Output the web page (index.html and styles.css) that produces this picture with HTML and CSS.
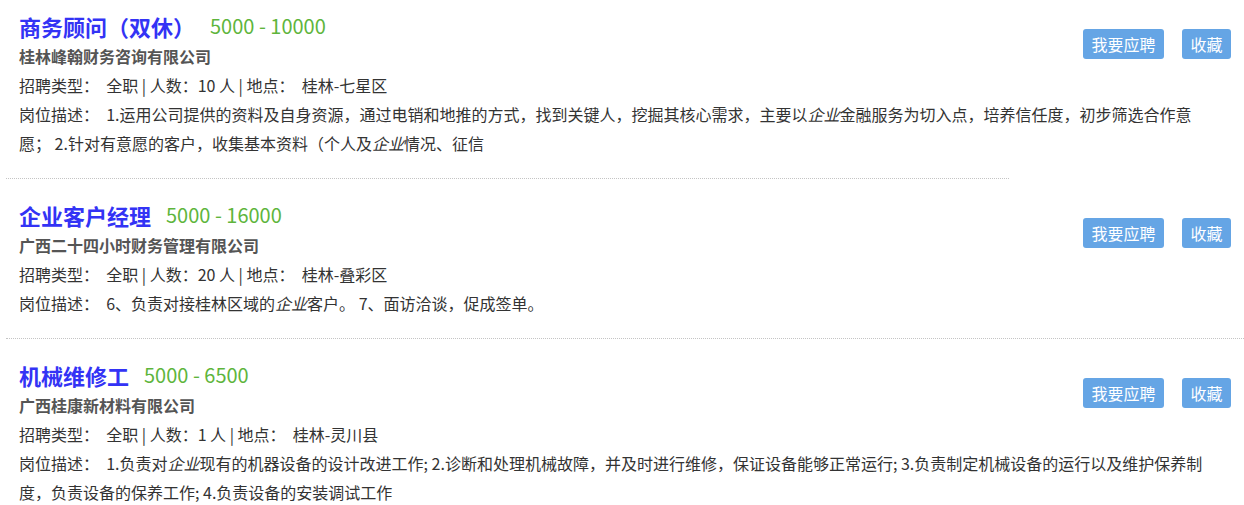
FILE: index.html
```html
<!DOCTYPE html>
<html>
<head>
	<meta charset="utf-8">
	<title>职位列表</title>
	<link rel="stylesheet" href="styles.css">
</head>
<body>
	<div class="job-list">
		<div class="job job-first">
			<div class="job-actions">
				<a class="btn" href="#">我要应聘</a>
				<a class="btn" href="#">收藏</a>
			</div>
			<div class="job-head">
				<a class="job-title" href="#">商务顾问（双休）</a>
				<span class="job-salary">5000 - 10000</span>
			</div>
			<div class="job-company">桂林峰翰财务咨询有限公司</div>
			<div class="job-info">招聘类型：&nbsp; 全职 | 人数：10 人 | 地点：&nbsp; 桂林-七星区</div>
			<div class="job-desc">岗位描述：&nbsp; 1.运用公司提供的资料及自身资源，通过电销和地推的方式，找到关键人，挖掘其核心需求，主要以<em>企业</em>金融服务为切入点，培养信任度，初步筛选合作意愿； 2.针对有意愿的客户，收集基本资料（个人及<em>企业</em>情况、征信</div>
		</div>
		<hr class="rule rule-short">

		<div class="job">
			<div class="job-actions">
				<a class="btn" href="#">我要应聘</a>
				<a class="btn" href="#">收藏</a>
			</div>
			<div class="job-head">
				<a class="job-title" href="#">企业客户经理</a>
				<span class="job-salary">5000 - 16000</span>
			</div>
			<div class="job-company">广西二十四小时财务管理有限公司</div>
			<div class="job-info">招聘类型：&nbsp; 全职 | 人数：20 人 | 地点：&nbsp; 桂林-叠彩区</div>
			<div class="job-desc">岗位描述：&nbsp; 6、负责对接桂林区域的<em>企业</em>客户。 7、面访洽谈，促成签单。</div>
		</div>
		<hr class="rule">

		<div class="job">
			<div class="job-actions">
				<a class="btn" href="#">我要应聘</a>
				<a class="btn" href="#">收藏</a>
			</div>
			<div class="job-head">
				<a class="job-title" href="#">机械维修工</a>
				<span class="job-salary">5000 - 6500</span>
			</div>
			<div class="job-company">广西桂康新材料有限公司</div>
			<div class="job-info">招聘类型：&nbsp; 全职 | 人数：1 人 | 地点：&nbsp; 桂林-灵川县</div>
			<div class="job-desc">岗位描述：&nbsp; 1.负责对<em>企业</em>现有的机器设备的设计改进工作; 2.诊断和处理机械故障，并及时进行维修，保证设备能够正常运行; 3.负责制定机械设备的运行以及维护保养制度，负责设备的保养工作; 4.负责设备的安装调试工作</div>
		</div>
	</div>
</body>
</html>
```

FILE: styles.css
```css
body {
	margin: 0;
	background: #fff;
	color: #333;
	font-family: "Noto Sans CJK SC", "Noto Sans", sans-serif;
	font-size: 16px;
}
a {
	text-decoration: none;
}
.job-list {
	margin-left: 6px;
}
.job {
	padding: 21px 13px 20px 13px;
}
.job-first {
	padding-top: 11px;
}
.rule {
	margin: 0;
	height: 0;
	border: 0;
	border-top: 1px dotted #c4c4c4;
}
.rule-short {
	width: 1003px;
}

/* head */
.job-head {
	display: flex;
	align-items: center;
	height: 30px;
}
.job-title {
	color: #3333f5;
	font-size: 22px; font-weight: bold;
	line-height: 30px;
}
.job-salary {
	color: #5eb53c;
	font-size: 20px;
	line-height: 30px;
	margin-left: 15px;
}
.job-company {
	color: #555;
	font-weight: bold;
	line-height: 30px;
}
.job-info,
.job-desc {
	line-height: 29px;
}
.job-desc {
	padding-right: 26px;
}
.job-desc em {
	font-style: italic;
}

/* buttons */
.job-actions {
	float: right;
	display: flex;
	gap: 18px;
	margin-top: 18px;
}
.btn {
	display: block;
	height: 30px; line-height: 30px;
	padding: 0 8.5px;
	background: #65a5e5;
	color: #fff;
	border-radius: 3px;
	font-size: 16px;
}
```
